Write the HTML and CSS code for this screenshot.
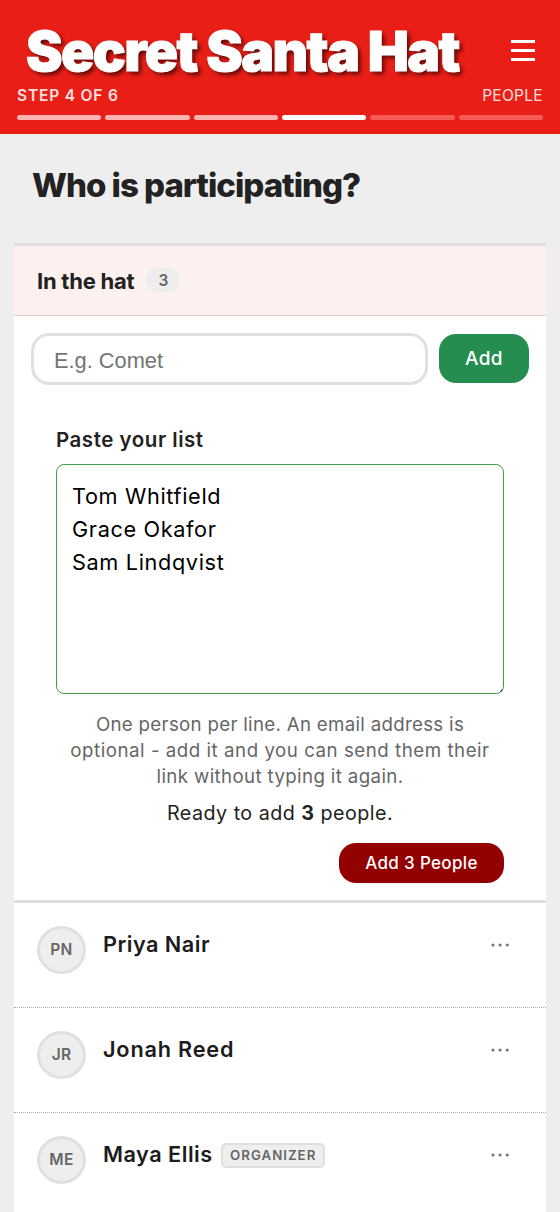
FILE: index.html
```html
<!DOCTYPE html>
<html lang="en">
<head>
<meta charset="utf-8">
<title>Secret Santa Hat</title>
<link rel="stylesheet" href="styles.css">
</head>
<body>
<header class="top">
  <div class="brand-row">
    <h1 class="brand">Secret Santa Hat</h1>
    <button class="menu" aria-label="Menu"><span></span><span></span><span></span></button>
  </div>
  <div class="step-row"><span class="step-now">STEP 4 OF 6</span><span class="step-name">PEOPLE</span></div>
  <div class="progress"><i class="done"></i><i class="done"></i><i class="done"></i><i class="current"></i><i></i><i></i></div>
</header>
<main>
  <h2 class="question">Who is participating?</h2>
  <section class="panel">
    <div class="panel-head"><h3 class="panel-title">In the hat</h3><span class="count">3</span></div>
    <div class="entry">
      <div class="add-row">
        <input class="name-input" placeholder="E.g. Comet">
        <button class="add-btn">Add</button>
      </div>
      <div class="paste">
        <label class="paste-label" for="list">Paste your list</label>
        <div class="paste-box"><textarea class="paste-area" id="list">Tom Whitfield
Grace Okafor
Sam Lindqvist</textarea></div>
        <p class="hint"><span class="hint-a">One person per line. An email address is</span><br><span class="hint-b">optional - add it and you can send them their</span><br><span class="hint-c">link without typing it again.</span></p>
        <p class="ready">Ready to add <b>3</b> people.</p>
        <button class="bulk-btn">Add 3 People</button>
      </div>
    </div>
    <ul class="people">
      <li class="person"><span class="avatar">PN</span><span class="name priya">Priya Nair</span><svg class="more" viewBox="0 0 18 4"><circle cx="2" cy="2" r="1.6"/><circle cx="9.1" cy="2" r="1.6"/><circle cx="16.2" cy="2" r="1.6"/></svg></li>
      <li class="person"><span class="avatar">JR</span><span class="name jonah">Jonah Reed</span><svg class="more" viewBox="0 0 18 4"><circle cx="2" cy="2" r="1.6"/><circle cx="9.1" cy="2" r="1.6"/><circle cx="16.2" cy="2" r="1.6"/></svg></li>
      <li class="person"><span class="avatar">ME</span><span class="name maya">Maya Ellis</span><span class="tag">ORGANIZER</span><svg class="more" viewBox="0 0 18 4"><circle cx="2" cy="2" r="1.6"/><circle cx="9.1" cy="2" r="1.6"/><circle cx="16.2" cy="2" r="1.6"/></svg></li>
    </ul>
  </section>
</main>
</body>
</html>
```

FILE: styles.css
```css
* { box-sizing: border-box; }
html { overflow: hidden; }
body {
  margin: 0;
  height: 1212px;
  overflow: hidden;
  background: #eeeeee;
  color: #222;
  font-family: Inter, "Liberation Sans", sans-serif;
}
h1, h2, h3, p, ul { margin: 0; padding: 0; }
button { border: 0; font-family: inherit; padding: 0; }

/* header */
.top { height: 133.5px; padding: 17px 17px 0; background: #e91f17; }
.brand-row { display: flex; justify-content: space-between; align-items: center; height: 67px; padding: 0 8px 0 9px; }
.brand {
  padding-top: 2px;
  color: #fff;
  font-size: 55px;
  font-weight: 900;
  line-height: 67px;
  letter-spacing: -1.62px;
  white-space: nowrap;
  -webkit-text-stroke: 1px #fff;
  text-shadow: 3px 3px 4px rgba(50, 0, 0, .75);
}
.menu { display: flex; flex-direction: column; gap: 5.6px; width: 24px; background: none; }
.menu span { height: 3px; background: #fff; }
.step-row { display: flex; justify-content: space-between; height: 22px; padding-top: 1px; line-height: 22px; font-size: 15.5px; color: #ffe0df; }
.step-now { font-weight: 600; letter-spacing: .82px; }
.step-name { letter-spacing: .3px; }
.progress { display: grid; grid-template-columns: repeat(6, 1fr); gap: 4px; margin-top: 8.5px; }
.progress i { height: 5px; border-radius: 3px; background: #f65b56; }
.progress .done { background: #fbb4b2; }
.progress .current { background: #fff; }

.question {
  height: 109px;
  padding: 30.5px 0 0 32px;
  font-size: 33px;
  font-weight: 800;
  line-height: 42px;
  letter-spacing: -1px;
}

/* participants panel */
.panel { margin: 0 14px; background: #fff; border-top: 3px solid #e0dddd; }
.panel-head {
  display: flex;
  align-items: center;
  gap: 12px;
  height: 70.5px;
  padding-left: 23px;
  background: #fdf1f0;
  border-bottom: 1px solid #ebcccc;
}
.panel-title { padding-top: 1px; font-size: 22px; font-weight: 700; letter-spacing: -.24px; }
.count {
  width: 34px;
  height: 24px;
  border-radius: 12px;
  background: #eeeeee;
  color: #666;
  font-size: 15.5px;
  font-weight: 600;
  line-height: 25px;
  text-align: center;
}
.entry { height: 587px; padding: 17px 17px 0; border-bottom: 3px solid #dedede; }
.add-row { display: flex; gap: 11px; align-items: flex-start; }
.name-input {
  flex: 1;
  min-width: 0;
  height: 52px;
  padding: 3px 20px 0;
  border: 3px solid #e0e0e0;
  border-radius: 18px;
  background: #fff;
  font: 21.8px "Liberation Sans", sans-serif;
}
.name-input::placeholder { color: #757575; }
.add-btn {
  width: 90px;
  height: 49px;
  margin-top: 1px;
  border-radius: 17px;
  background: #258d50;
  color: #fff;
  font-size: 19px;
  font-weight: 500;
  letter-spacing: .4px;
}
.paste { display: flex; flex-direction: column; padding: 41px 25px 0; }
.paste-label { height: 38px; line-height: 27px; font-size: 20.5px; font-weight: 600; letter-spacing: .53px; }
.paste-box { position: relative; height: 230px; }
/* resize grip, mostly hidden by the rounded corner */
.paste-box::after {
  content: "";
  position: absolute;
  right: 1px;
  bottom: 3px;
  width: 3px;
  height: 1px;
  background: #24402a;
  transform: rotate(-45deg);
}
.paste-area {
  display: block;
  width: 448px;
  height: 230px;
  padding: 15px 15px;
  border: 1.5px solid #43a04a;
  border-radius: 8px;
  background: #fff;
  color: #000;
  font: 400 21.7px/33px Inter, sans-serif;
  letter-spacing: .64px;
  resize: none;
}
.hint { margin-top: 18px; color: #666; font-size: 18.7px; line-height: 26px; text-align: center; white-space: nowrap; }
.hint-a { letter-spacing: .3px; }
.hint-b { letter-spacing: .53px; }
.hint-c { letter-spacing: .37px; }
.ready { margin-top: 9px; font-size: 19.7px; line-height: 28px; letter-spacing: .47px; text-align: center; }
.bulk-btn {
  align-self: flex-end;
  width: 165px;
  height: 40px;
  margin-top: 16px;
  border-radius: 17px;
  background: #930000;
  color: #fff;
  font-size: 17px;
  font-weight: 500;
  letter-spacing: .33px;
}

/* people list */
.people { list-style: none; }
.person {
  display: flex;
  align-items: flex-start;
  height: 105px;
  padding: 23px 37.5px 0 23px;
  border-bottom: 1px dotted #aaa;
}
.avatar {
  width: 49px;
  height: 48px;
  border: 3px solid #e0e0e0;
  border-radius: 50%;
  background: #eeeeee;
  color: #666;
  font-size: 15.5px;
  font-weight: 600;
  line-height: 42px;
  text-align: center;
  letter-spacing: .3px;
}
.name { margin-left: 17px; font-size: 21.7px; font-weight: 600; line-height: 37px; color: #1c1c1c; }
.priya { letter-spacing: .48px; }
.jonah { letter-spacing: .8px; }
.maya { letter-spacing: .5px; }
.tag {
  width: 104px;
  height: 25px;
  margin: 7px 0 0 8.5px;
  border: 2px solid #dfdfdf;
  border-radius: 5px;
  background: #eeeeee;
  color: #666;
  font-size: 13.3px;
  font-weight: 600;
  line-height: 21px;
  letter-spacing: 1px;
  text-align: center;
}
.more { width: 18px; height: 4px; margin: 17px 0 0 auto; fill: #777; }
```
